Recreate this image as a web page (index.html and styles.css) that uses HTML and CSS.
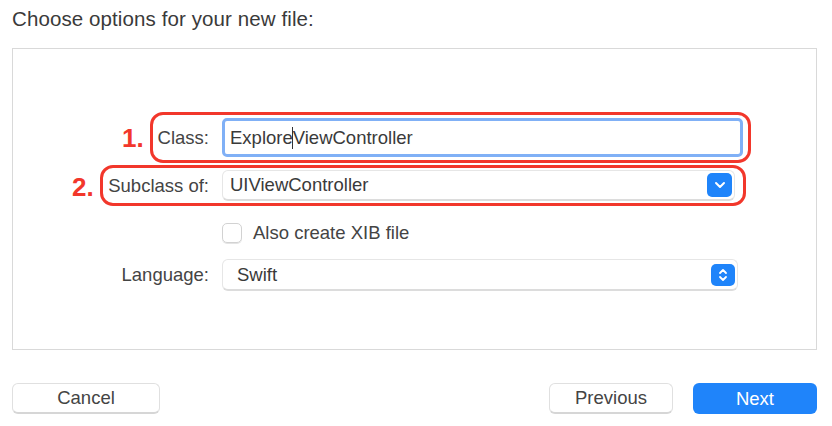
FILE: index.html
```html
<!DOCTYPE html>
<html>
<head>
<meta charset="utf-8">
<link rel="stylesheet" href="styles.css">
</head>
<body>
<div class="dialog">
  <h1 class="title">Choose options for your new file:</h1>
  <div class="panel">
    <div class="form">
      <div class="row r-class">
        <label class="label">Class:</label>
        <div class="field focused"><span class="val">Explore<span class="caret"></span>ViewController</span></div>
      </div>
      <div class="row r-sub">
        <label class="label">Subclass of:</label>
        <div class="popup sub"><span class="val">UIViewController</span>
          <span class="pbtn"><svg width="12" height="8" viewBox="0 0 12 8"><path d="M2 2 L6 6 L10 2" fill="none" stroke="#fff" stroke-width="2" stroke-linecap="round" stroke-linejoin="round"/></svg></span>
        </div>
      </div>
      <div class="row r-check">
        <span class="label"></span>
        <div class="check"><span class="box"></span><span class="ctext">Also create XIB file</span></div>
      </div>
      <div class="row r-lang">
        <label class="label">Language:</label>
        <div class="popup lang"><span class="val swift">Swift</span>
          <span class="pbtn step"><svg width="12" height="16" viewBox="0 0 12 16"><path d="M3 6 L6 3 L9 6 M3 10 L6 13 L9 10" fill="none" stroke="#fff" stroke-width="1.8" stroke-linecap="round" stroke-linejoin="round"/></svg></span>
        </div>
      </div>
    </div>

    <div class="mark m1"></div>
    <div class="mark m2"></div>
    <span class="num n1">1.</span>
    <span class="num n2">2.</span>
  </div>
  <div class="footer">
    <button class="btn cancel">Cancel</button>
    <div class="spacer"></div>
    <button class="btn prev">Previous</button>
    <button class="btn next">Next</button>
  </div>
</div>
</body>
</html>
```
FILE: styles.css
```css
html, body {
  margin: 0;
  padding: 0;
  background: #ffffff;
}
body {
  font-family: "Liberation Sans", Arial, sans-serif;
  color: #3f3f3f;
  width: 832px;
  height: 426px;
  overflow: hidden;
}
.dialog {
  padding: 0 15px 0 12px;
}
.title {
  margin: 0;
  padding-top: 7px;
  height: 48px;
  box-sizing: border-box;
  font-size: 20.5px;
  font-weight: normal;
  color: #3a3a3a;
  line-height: 24px;
  letter-spacing: 0.1px;
}
.panel {
  position: relative;
  border: 1px solid #d9d9d9;
  height: 302px;
  box-sizing: border-box;
  padding-top: 69px;
}
.form {
  display: flex;
  flex-direction: column;
}
.row {
  display: flex;
  align-items: center;
  column-gap: 13px;
}
.r-sub { margin-top: 13px; }
.r-check { margin-top: 21px; }
.r-lang { margin-top: 16px; }
.label {
  width: 196px;
  flex: none;
  text-align: right;
  font-size: 18.5px;
  color: #444;
}
.val {
  font-size: 18.5px;
  color: #3a3a3a;
}
.field {
  width: 521px;
  height: 39px;
  box-sizing: border-box;
  border: 3px solid #80b0f6;
  border-radius: 5px;
  display: flex;
  align-items: center;
  padding-left: 5px;
}
.caret {
  display: inline-block;
  width: 1.5px;
  height: 22px;
  background: #333;
  vertical-align: -5px;
  margin: 0 -0.75px;
}
.popup {
  box-sizing: border-box;
  display: flex;
  align-items: center;
  justify-content: space-between;
  border: 1px solid #e6e6e6;
  border-bottom: 2px solid #dcdcdc;
  border-radius: 6px;
  background: #fff;
}
.popup.sub {
  height: 31px;
  width: 513px;
  padding: 0 2px 0 7px;
}
.popup.lang {
  height: 32px;
  width: 516px;
  padding: 0 2px 0 14px;
}
.pbtn {
  width: 25px;
  height: 24px;
  background: #1f84fa;
  border-radius: 5px;
  display: flex;
  align-items: center;
  justify-content: center;
}
.pbtn.step {
  width: 24px;
  height: 22px;
}
.check {
  display: flex;
  align-items: center;
  height: 21px;
}
.box {
  width: 20px;
  height: 20px;
  box-sizing: border-box;
  border: 1px solid #d2d2d2;
  border-radius: 5px;
  box-shadow: 0 1px 0 #e4e4e4;
  margin-right: 11px;
}
.ctext {
  font-size: 18.5px;
  color: #444;
}
.mark {
  position: absolute;
  border: 3px solid #f2372b;
  border-radius: 13px;
  box-sizing: border-box;
}
.m1 {
  left: 137px;
  top: 63px;
  width: 601px;
  height: 51px;
}
.m2 {
  left: 87px;
  top: 116px;
  width: 646px;
  height: 41px;
}
.num {
  position: absolute;
  color: #f2372b;
  font-size: 26px;
  font-weight: bold;
  line-height: 26px;
  letter-spacing: 0px;
}
.n1 {
  left: 109px;
  top: 76px;
}
.n2 {
  left: 59px;
  top: 125px;
}
.footer {
  display: flex;
  align-items: center;
  margin-top: 33px;
  column-gap: 20px;
}
.spacer {
  flex: 1;
}
.btn {
  font-family: "Liberation Sans", Arial, sans-serif;
  font-size: 18.5px;
  height: 31px;
  box-sizing: border-box;
  border-radius: 6px;
  border: 1px solid #e0e0e0;
  border-bottom: 2px solid #d6d6d6;
  background: #fff;
  color: #444;
  padding: 0;
}
.cancel {
  width: 148px;
}
.prev {
  width: 124px;
}
.next {
  width: 124px;
  background: #1f84fa;
  border: none;
  color: #fff;
}
```
